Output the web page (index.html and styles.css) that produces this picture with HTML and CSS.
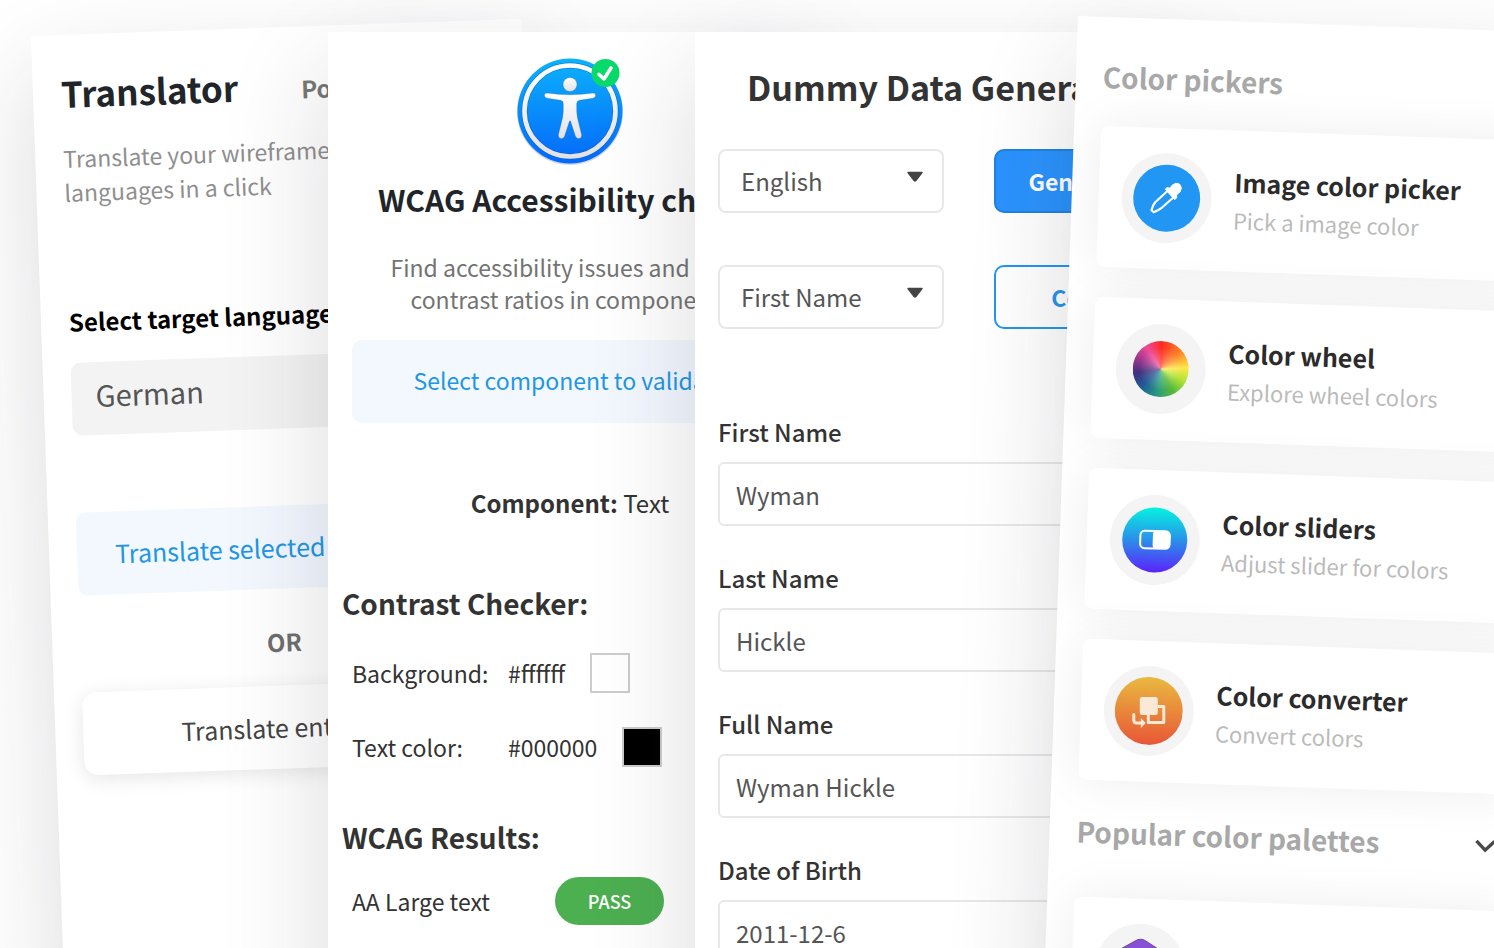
FILE: index.html
```html
<!DOCTYPE html>
<html lang="en">
<head>
    <meta charset="UTF-8">
    <meta name="viewport" content="width=device-width, initial-scale=1.0">
    <title>Design plugins</title>
    <link rel="stylesheet" href="styles.css">
</head>
<body>

<main class="stage">

    <!-- Translator -->
    <section class="panel translator">
        <header class="translator-head">
            <h1>Translator</h1>
            <a class="powered" href="#">Powered by</a>
        </header>
        <p class="intro">Translate your wireframes to other<br>languages in a click</p>
        <label class="target-label" for="target">Select target language</label>
        <select class="target" id="target">
            <option>German</option>
            <option>French</option>
        </select>
        <button class="button soft selected">Translate selected elements</button>
        <p class="or">OR</p>
        <button class="button raised">Translate entire app</button>
    </section>

    <!-- WCAG checker -->
    <section class="panel wcag">
        <svg class="wcag-logo" width="112" height="112" viewBox="0 0 112 112" aria-hidden="true">
            <defs>
                <linearGradient id="wcag-blue" x1="0" y1="0" x2="0" y2="1">
                    <stop offset="0" stop-color="#0cb2fb"/>
                    <stop offset="1" stop-color="#0468fa"/>
                </linearGradient>
                <linearGradient id="wcag-white" x1="0" y1="0" x2="0" y2="1">
                    <stop offset="0" stop-color="#ffffff"/>
                    <stop offset="1" stop-color="#e2e2e6"/>
                </linearGradient>
            </defs>
            <circle cx="56" cy="57" r="53" fill="#00205a" opacity=".18"/>
            <circle cx="56" cy="56" r="52.5" fill="url(#wcag-blue)"/>
            <circle cx="56" cy="56" r="45.5" fill="none" stroke="#0558b8" stroke-width="6" opacity=".5"/>
            <circle cx="56" cy="56" r="45.5" fill="none" stroke="url(#wcag-white)" stroke-width="4.6"/>
            <g fill="url(#wcag-white)" stroke="#0558b8" stroke-opacity=".35" stroke-width=".8">
                <circle cx="56" cy="29.500" r="7"/>
                <path d="M33 38 Q56 41.500 79 38 Q82 38.200 81.500 41 Q81.500 42.600 79 43.200 L65.500 45.300 Q62.700 46 62.700 49 Q62.400 57 63.500 63 L67.600 79.500 Q68 83 65.300 83.600 Q62.800 84 61.500 81.500 L56.800 67 Q56 64.500 55.200 67 L50.500 81.500 Q49.200 84 46.700 83.600 Q44 83 44.400 79.500 L48.500 63 Q49.600 57 49.300 49 Q49.300 46 46.500 45.300 L33 43.200 Q30.500 42.600 30.500 41 Q30 38.200 33 38 Z"/>
            </g>
            <circle cx="91.500" cy="18" r="14" fill="#07da6b"/>
            <path d="M85 19.500 L90 24 L97 13" fill="none" stroke="#fff" stroke-width="3.600" stroke-linecap="round" stroke-linejoin="round"/>
        </svg>
        <h2 class="wcag-title">WCAG Accessibility checker</h2>
        <p class="wcag-intro">Find accessibility issues and color<br>contrast ratios in components</p>
        <button class="button soft validate">Select component to validate</button>
        <p class="component"><b>Component:</b> Text</p>

        <h3>Contrast Checker:</h3>
        <dl class="colors">
            <div class="color-row">
                <dt>Background:</dt>
                <dd>#ffffff <span class="swatch white"></span></dd>
            </div>
            <div class="color-row">
                <dt>Text color:</dt>
                <dd>#000000 <span class="swatch black"></span></dd>
            </div>
        </dl>

        <h3>WCAG Results:</h3>
        <div class="result">
            <span>AA Large text</span>
            <span class="pass">PASS</span>
        </div>
    </section>

    <!-- Dummy data -->
    <section class="panel dummy">
        <h2 class="dummy-title">Dummy Data Generator</h2>
        <div class="options">
            <div class="select-wrap">
                <select aria-label="Language">
                    <option>English</option>
                </select>
                <svg width="18" height="12" viewBox="0 0 18 12" aria-hidden="true"><path d="M2 1.500H16L9.800 9.500Q9 10.300 8.200 9.500Z" fill="#444" stroke="#444" stroke-width="1.500" stroke-linejoin="round"/></svg>
            </div>
            <button class="action primary">Generate</button>
            <div class="select-wrap">
                <select aria-label="Data type">
                    <option>First Name</option>
                </select>
                <svg width="18" height="12" viewBox="0 0 18 12" aria-hidden="true"><path d="M2 1.500H16L9.800 9.500Q9 10.300 8.200 9.500Z" fill="#444" stroke="#444" stroke-width="1.500" stroke-linejoin="round"/></svg>
            </div>
            <button class="action outline">Copy</button>
        </div>
        <form class="fields">
            <label for="first">First Name</label>
            <input id="first" type="text" value="Wyman">
            <label for="last">Last Name</label>
            <input id="last" type="text" value="Hickle">
            <label for="full">Full Name</label>
            <input id="full" type="text" value="Wyman Hickle">
            <label for="birth">Date of Birth</label>
            <input id="birth" type="text" value="2011-12-6">
        </form>
    </section>

    <!-- Color tools -->
    <section class="panel tools">
        <h2>Color pickers</h2>
        <div class="cards">
            <a class="card" href="#">
                <span class="icon">
                    <svg width="68" height="68" viewBox="0 0 68 68" aria-hidden="true">
                        <circle cx="34" cy="34" r="33.500" fill="#2196f3"/>
                        <g transform="rotate(-2 34 34)">
                            <path d="M34.500 27 L22.500 38 Q20 41 18.800 46 L21 48 Q25.500 46.500 28.500 44 L41.500 32.500" fill="none" stroke="#fff" stroke-width="2.200" stroke-linejoin="round"/>
                            <path d="M32.500 25 L34.500 23.400 L37.500 24 L39.500 21 Q43 17.600 47 20 Q50 23.500 47.500 27.500 L44 30.500 L44 33.500 L42 35.500 Z" fill="#fff" stroke="#fff" stroke-linejoin="round"/>
                        </g>
                    </svg>
                </span>
                <span class="card-text">
                    <b>Image color picker</b>
                    <small>Pick a image color</small>
                </span>
            </a>
            <a class="card" href="#">
                <span class="icon"><span class="wheel"></span></span>
                <span class="card-text">
                    <b>Color wheel</b>
                    <small>Explore wheel colors</small>
                </span>
            </a>
            <a class="card" href="#">
                <span class="icon">
                    <svg width="68" height="68" viewBox="0 0 68 68" aria-hidden="true">
                        <defs>
                            <linearGradient id="slider-bg" x1="0" y1="0" x2="0" y2="1">
                                <stop offset="0" stop-color="#05f3e0"/>
                                <stop offset=".5" stop-color="#2a90ea"/>
                                <stop offset="1" stop-color="#5c22fb"/>
                            </linearGradient>
                        </defs>
                        <circle cx="34" cy="34" r="32.500" fill="url(#slider-bg)"/>
                        <rect x="19.500" y="25" width="29.500" height="17.500" rx="4.500" fill="none" stroke="#fff" stroke-width="2"/>
                        <path d="M34 25H45Q49 25 49 29V38.500Q49 42.500 45 42.500H34Q32 42 32 39V28.500Q32 25.500 34 25Z" fill="#fff"/>
                    </svg>
                </span>
                <span class="card-text">
                    <b>Color sliders</b>
                    <small>Adjust slider for colors</small>
                </span>
            </a>
            <a class="card" href="#">
                <span class="icon">
                    <svg width="68" height="68" viewBox="0 0 68 68" aria-hidden="true">
                        <defs>
                            <linearGradient id="convert-bg" x1="0" y1="0" x2="0" y2="1">
                                <stop offset="0" stop-color="#e9ba40"/>
                                <stop offset="1" stop-color="#e85636"/>
                            </linearGradient>
                        </defs>
                        <circle cx="34" cy="34" r="34" fill="url(#convert-bg)"/>
                        <g transform="rotate(-2 34 34)">
                            <path d="M43 29.500H49V45.500H33.500V38" fill="none" stroke="#fbe9d8" stroke-width="3" stroke-linejoin="round"/>
                            <rect x="25" y="20" width="18" height="18" rx="2.500" fill="#fbe9d8"/>
                            <path d="M19 37.500V43Q19 46 22 46H27" fill="none" stroke="#fbe9d8" stroke-width="3" stroke-linecap="round"/>
                            <path d="M26 41L31 46L26 51Z" fill="#fbe9d8"/>
                        </g>
                    </svg>
                </span>
                <span class="card-text">
                    <b>Color converter</b>
                    <small>Convert colors</small>
                </span>
            </a>
        </div>
        <div class="palettes-head">
            <h2>Popular color palettes</h2>
            <svg width="24" height="24" viewBox="0 0 24 24" aria-hidden="true"><path d="M3 8.500L12 17.500L21 8.500" fill="none" stroke="#4a4a4a" stroke-width="3.400"/></svg>
        </div>
        <div class="cards">
            <a class="card" href="#" aria-label="Material palette">
                <span class="icon">
                    <svg width="62" height="62" viewBox="0 0 62 62" aria-hidden="true">
                        <path d="M27 2.500Q31 .5 35 2.500L55 14.500Q58 16.500 58 20V42Q58 45.500 55 47.500L35 59.500Q31 61.500 27 59.500L7 47.500Q4 45.500 4 42V20Q4 16.500 7 14.500Z" fill="#8950d8" stroke="#6a4a9c" stroke-width="1"/>
                    </svg>
                </span>
            </a>
        </div>
    </section>

</main>

</body>
</html>
```
FILE: styles.css
```css
* {
    box-sizing: border-box;
}
body {
    margin: 0;
    overflow: hidden;
    background-color: #fff;
    color: #333;
    font-family: "Noto Sans CJK SC", "Noto Sans", sans-serif;
    font-size: 24px;
    line-height: 32px;
}
h1, h2, h3, p, dl, dd {
    margin: 0;
}
button, select, input {
    font: inherit;
}
a {
    color: inherit;
    text-decoration: none;
}

/* the panels are wider than their columns, so each lies over the one before */
.stage {
    display: grid;
    grid-template-columns: minmax(0, 297fr) minmax(0, 367fr) minmax(0, 383fr) minmax(0, 416fr);
    height: 100vh;
    padding-left: 31px;
    overflow: hidden;
}
.panel {
    position: relative;
    width: 491px;
    height: 120vh;
    background-color: #fff;
    box-shadow: 0 40px 100px rgba(30, 30, 50, 0.16);
    white-space: nowrap;
}

/* Translator */
.translator {
    margin-top: 36px;
    padding: 38px 55px 0 28px;
    transform: rotate(-2deg);
    transform-origin: 0 0;
}
.translator-head {
    display: flex;
    align-items: flex-end;
    gap: 63px;
    height: 40px;
}
h1 {
    font-size: 35px;
    line-height: 40px;
    color: #212529;
}
.powered {
    font-weight: bold;
    color: #777;
}
.intro {
    margin-top: 28px;
    font-size: 23px;
    line-height: 34px;
    color: #8f8f8f;
}
.target-label {
    display: block;
    margin-top: 97px;
    font-weight: bold;
    color: #000;
}
.target {
    appearance: none;
    display: block;
    width: 100%;
    height: 73px;
    margin-top: 25px;
    padding: 0 24px 10px;
    border: none;
    border-radius: 10px;
    background-color: #f3f3f3;
    color: #555;
    font-size: 29px;
}
.button {
    display: block;
    width: 100%;
    height: 83px;
    border: none;
    border-radius: 10px;
    cursor: pointer;
}
.button.soft {
    background-color: #f3f8ff;
    color: #2196e3;
}
.button.selected {
    margin-top: 77px;
    padding: 0 38px 2px;
    font-size: 25px;
    text-align: left;
}
.or {
    margin-top: 37px;
    text-align: center;
    font-weight: bold;
    color: #6f6f6f;
}
.button.raised {
    margin-top: 28px;
    padding: 0 98px 2px;
    border-radius: 14px;
    background-color: #fff;
    color: #444;
    font-size: 25px;
    text-align: left;
    box-shadow: 0 4px 20px rgba(0, 0, 0, 0.1);
}

/* WCAG checker */
.wcag {
    width: 484px;
    margin-top: 32px;
    padding: 23px 14px 0;
    font-size: 23px;
}
.wcag-logo {
    display: block;
    margin: 0 auto;
}
.wcag-title {
    margin-top: 12px;
    padding-left: 36px;
    font-size: 30px;
    line-height: 40px;
    color: #212529;
}
.wcag-intro {
    margin-top: 32px;
    text-align: center;
    color: #737373;
}
.validate {
    width: 436px;
    margin: 25px auto 0;
    padding-bottom: 4px;
}
.component {
    margin-top: 64px;
    text-align: center;
    font-size: 24px;
}
h3 {
    margin-top: 64px;
    font-size: 28px;
    line-height: 40px;
}
.colors {
    display: grid;
    gap: 34px;
    margin: 30px 0 0 10px;
}
.color-row {
    display: flex;
    align-items: center;
    height: 40px;
}
.color-row dt {
    width: 156px;
}
.color-row dd {
    display: flex;
    align-items: center;
    gap: 25px;
}
.swatch {
    width: 40px;
    height: 40px;
    border: 2px solid #ccc;
}
.swatch.black {
    background-color: #000;
}
.colors + h3 {
    margin-top: 50px;
}
.result {
    display: flex;
    align-items: center;
    justify-content: space-between;
    width: 322px;
    margin-top: 20px;
    padding-left: 10px;
}
.pass {
    width: 109px;
    border-radius: 24px;
    background-color: #4caf50;
    color: #fff;
    text-align: center;
    font-size: 18px;
    font-weight: 500;
    line-height: 48px;
}

/* Dummy data */
.dummy {
    margin-top: 32px;
    padding: 35px 24px 0 23px;
}
.dummy-title {
    padding-left: 29px;
    font-size: 34px;
    line-height: 40px;
}
.options {
    display: grid;
    grid-template-columns: 226px 172px;
    gap: 52px 50px;
    margin-top: 42px;
}
.select-wrap {
    position: relative;
}
.select-wrap select {
    appearance: none;
    width: 100%;
    height: 64px;
    padding: 0 21px;
    border: 2px solid #e8e8e8;
    border-radius: 8px;
    background-color: #fff;
    color: #555;
}
.select-wrap svg {
    position: absolute;
    top: 22px;
    right: 20px;
    pointer-events: none;
}
.action {
    height: 64px;
    border: 2px solid #2196f3;
    border-radius: 10px;
    font-size: 23px;
    font-weight: bold;
    cursor: pointer;
}
.action.primary {
    border-color: #1f82e0;
    background-color: #2b93fd;
    color: #fff;
}
.action.outline {
    background-color: transparent;
    color: #2b93ea;
}
.fields {
    margin-top: 87px;
}
.fields label {
    display: block;
    font-weight: 500;
}
.fields input {
    display: block;
    width: 100%;
    height: 64px;
    margin: 14px 0 36px;
    padding: 0 16px;
    border: 2px solid #e8e8e8;
    border-radius: 6px;
    background-color: transparent;
    color: #555;
}

/* Color tools */
.tools {
    margin-top: 16px;
    padding: 39px 27px 0;
    transform: rotate(2deg);
    transform-origin: 0 0;
}
.tools h2 {
    font-size: 28px;
    line-height: 40px;
    color: #a8a8a8;
}
.cards {
    display: grid;
    gap: 30px;
    margin-top: 30px;
}
.card {
    display: flex;
    align-items: center;
    gap: 22px;
    height: 141px;
    padding: 0 23px 2px;
    border-radius: 8px;
    background-color: #fff;
    box-shadow: 0 0 50px rgba(0, 0, 0, 0.07);
}
.icon {
    display: flex;
    align-items: center;
    justify-content: center;
    width: 90px;
    height: 90px;
    border-radius: 50%;
    background-color: #f4f4f4;
}
.wheel {
    width: 56px;
    height: 56px;
    border-radius: 50%;
    background:
        radial-gradient(circle, rgba(255, 255, 255, 0.35), rgba(255, 255, 255, 0) 55%),
        conic-gradient(#fd2a20, #fd8a2a 50deg, #fde84a 85deg, #b4e336 115deg, #55b83c 150deg, #2a9c80 185deg, #1e5b96 225deg, #43307e 260deg, #96348c 290deg, #ee4a9a 325deg, #fd2a20);
}
.card-text b,
.card-text small {
    display: block;
    line-height: 38px;
}
.card-text b {
    font-size: 25px;
    color: #2b2b2b;
}
.card-text small {
    font-size: 22px;
    color: #bbb;
}
.palettes-head {
    display: flex;
    align-items: center;
    justify-content: space-between;
    margin-top: 31px;
    padding-right: 16px;
}
.palettes-head + .cards {
    margin-top: 46px;
}
```
